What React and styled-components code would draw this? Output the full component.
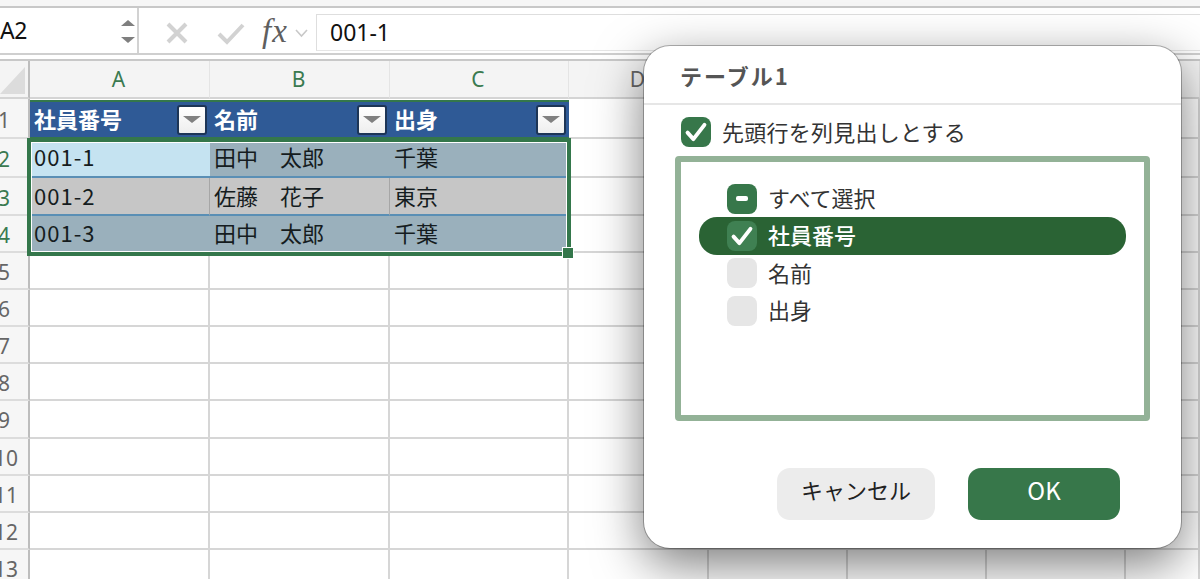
import styled, { createGlobalStyle } from "styled-components";

const GlobalStyle = createGlobalStyle`
  html, body {
    margin: 0;
    padding: 0;
    background: #fff;
    font-family: "Noto Sans", "Noto Sans CJK JP", sans-serif;
  }
`;

const JP = `"Noto Sans CJK JP", "Noto Sans", sans-serif`;

const Page = styled.div`
  position: relative;
  width: 1200px;
  height: 579px;
  overflow: hidden;
  background: #fff;
`;

const TopStrip = styled.div`
  height: 6px;
  background: #f6f6f6;
  border-bottom: 2px solid #c8c8c8;
`;

const FormulaBar = styled.div`
  display: flex;
  height: 47px;
  box-sizing: border-box;
  border-bottom: 2px solid #cfcfcf;
  background: #fff;
`;

const NameBox = styled.div`
  width: 139px;
  box-sizing: border-box;
  display: flex;
  align-items: center;
  justify-content: space-between;
  padding: 0 2px 2px 0;
  border-right: 2px solid #d2d2d2;
  font-size: 23px;
  letter-spacing: -0.5px;
  color: #111;
`;

const Spinner = styled.div`
  display: flex;
  flex-direction: column;
  gap: 11px;
  margin-top: 3px;
`;

const Tools = styled.div`
  width: 177px;
  box-sizing: border-box;
  display: flex;
  align-items: center;
  padding: 5px 0 0 26px;
`;

const FxLabel = styled.span`
  font-family: "Liberation Serif", serif;
  font-style: italic;
  font-size: 33px;
  line-height: 1;
  letter-spacing: 1px;
  color: #5f5f5f;
  margin: -4px 6px 0 16px;
`;

const FormulaInput = styled.div`
  flex: 1;
  margin-top: 6px;
  height: 37px;
  box-sizing: border-box;
  padding: 0 13px 2px;
  display: flex;
  align-items: center;
  border-top: 1px solid #dedede;
  border-left: 1px solid #dedede;
  border-bottom: 1px solid #e6e6e6;
  font-size: 23px;
  color: #111;
`;

const BarGap = styled.div`
  height: 4px;
  background: #fff;
  border-bottom: 2px solid #c8c8c8;
`;

const Sheet = styled.div`
  position: relative;
`;

const Row = styled.div`
  display: grid;
  grid-template-columns: 30px 180px 180px 179px 140px 139px 139px 139px 74px;
  height: ${(p) => p.$h}px;
`;

const Corner = styled.div`
  box-sizing: border-box;
  background: #f4f4f4;
  border-right: 2px solid #bdbdbd;
  border-bottom: 2px solid #d4d4d4;
  display: flex;
  align-items: flex-end;
  justify-content: flex-end;
  padding: 0 3px 3px 0;
`;

const ColHead = styled.div`
  box-sizing: border-box;
  background: #f4f4f4;
  border-right: 1px solid #e4e4e4;
  border-bottom: 2px solid #d4d4d4;
  padding-right: 2px;
  display: flex;
  align-items: center;
  justify-content: center;
  font-size: 21px;
  color: ${(p) => (p.$active ? "#3a7a50" : "#666")};
`;

const RowHead = styled.div`
  box-sizing: border-box;
  background: #f6f6f6;
  border-right: 2px solid #bdbdbd;
  border-bottom: 2px solid #dcdcdc;
  padding-top: 3px;
  display: flex;
  align-items: center;
  font-size: 21px;
  color: ${(p) => (p.$active ? "#3a7a50" : "#666")};
`;

const RowNum = styled.span`
  width: ${(p) => (p.$wide ? 12 : 8)}px;
  display: flex;
  justify-content: center;
  white-space: nowrap;
`;

const Cell = styled.div`
  box-sizing: border-box;
  border-right: 2px solid #d6d6d6;
  border-bottom: 2px solid #d6d6d6;
`;

const HeadCell = styled.div`
  box-sizing: border-box;
  margin-top: 1px;
  background: #2f5a96;
  border-top: 2px solid #34774b;
  border-bottom: 2px solid #34774b;
  display: flex;
  align-items: center;
  justify-content: space-between;
  padding: 0 3px 0 4px;
  font-family: ${JP};
  font-size: 22px;
  font-weight: 700;
  color: #fff;
`;

const HeadLabel = styled.span`
  margin-top: -4px;
`;

const FilterButton = styled.div`
  width: 30px;
  height: 30px;
  box-sizing: border-box;
  border: 2px solid #1d3556;
  border-radius: 3px;
  background: linear-gradient(#fff, #eee);
  display: flex;
  align-items: center;
  justify-content: center;
`;

const Arrow = styled.div`
  width: 0;
  height: 0;
  border-left: ${(p) => p.$size}px solid transparent;
  border-right: ${(p) => p.$size}px solid transparent;
  ${(p) => (p.$up ? "border-bottom" : "border-top")}: ${(p) =>
    Math.round(p.$size * 0.8)}px solid ${(p) => p.$color};
`;

const DataCell = styled.div`
  box-sizing: border-box;
  background: ${(p) => p.$bg};
  border-bottom: 2px solid #5a8fb5;
  border-right: ${(p) => (p.$divider ? "1px solid #a6a6a6" : "none")};
  display: flex;
  align-items: center;
  padding: 0 0 3px 4px;
  font-family: ${JP};
  font-size: 22px;
  color: #151c20;
  white-space: pre;
  letter-spacing: ${(p) => (p.$code ? "1px" : "0")};
`;

const Selection = styled.div`
  position: absolute;
  left: 27px;
  top: 77px;
  width: 544px;
  height: 118px;
  box-sizing: border-box;
  border: 4px solid #34774b;
  box-shadow: inset 0 0 0 1px #fff;
  pointer-events: none;
`;

const Handle = styled.div`
  position: absolute;
  right: -6px;
  bottom: -6px;
  width: 10px;
  height: 10px;
  background: #34774b;
  outline: 1px solid #fff;
`;

const Dialog = styled.div`
  position: absolute;
  left: 644px;
  top: 46px;
  width: 537px;
  height: 502px;
  box-sizing: border-box;
  display: flex;
  flex-direction: column;
  background: #fff;
  border-radius: 26px;
  box-shadow: 0 0 0 1px rgba(0, 0, 0, 0.28), 0 16px 50px rgba(0, 0, 0, 0.52);
  font-family: ${JP};
`;

const DialogTitle = styled.div`
  height: 59px;
  flex: none;
  box-sizing: border-box;
  border-bottom: 2px solid #e6e6e6;
  padding-left: 36px;
  display: flex;
  align-items: center;
  font-size: 22px;
  font-weight: 700;
  letter-spacing: 2px;
  color: #555;
`;

const DialogBody = styled.div`
  flex: 1;
  display: flex;
  flex-direction: column;
  padding: 12px 31px 28px;
`;

const HeaderOption = styled.div`
  display: flex;
  align-items: center;
  gap: 11px;
  padding-left: 6px;
  height: 30px;
  font-size: 22px;
  letter-spacing: 0.25px;
  color: #333;
`;

const OptionLabel = styled.span`
  margin-top: -3px;
`;

const Box = styled.div`
  width: 30px;
  height: 30px;
  flex: none;
  border-radius: 8px;
  display: flex;
  align-items: center;
  justify-content: center;
  background: ${(p) =>
    p.$state === "off" ? "#e6e6e6" : p.$hot ? "#3f8052" : "#37774a"};
`;

const Dash = styled.div`
  width: 12px;
  height: 5px;
  border-radius: 2px;
  background: #fff;
`;

const ListBox = styled.div`
  margin-top: 9px;
  height: 265px;
  box-sizing: border-box;
  border: 6px solid #93b297;
  border-radius: 4px;
  padding: 18px 18px 0;
`;

const ListRow = styled.div`
  display: flex;
  align-items: center;
  gap: 11px;
  height: 37.3px;
  padding-left: 28px;
  border-radius: 18px;
  font-size: 22px;
  color: ${(p) => (p.$selected ? "#fff" : "#333")};
  font-weight: ${(p) => (p.$selected ? 500 : 400)};
  background: ${(p) => (p.$selected ? "#2a6334" : "transparent")};
`;

const Footer = styled.div`
  margin-top: auto;
  display: flex;
  justify-content: flex-end;
  gap: 33px;
  padding-right: 30px;
`;

const Button = styled.button`
  width: ${(p) => (p.$primary ? 152 : 158)}px;
  height: 52px;
  padding: 0 0 10px;
  border: none;
  border-radius: 13px;
  font-family: inherit;
  font-size: ${(p) => (p.$primary ? 24 : 22)}px;
  font-weight: 400;
  color: ${(p) => (p.$primary ? "#fff" : "#222")};
  background: ${(p) => (p.$primary ? "#37774a" : "#ececec")};
`;

const tableRows = [
  { num: 2, cells: ["001-1", "田中　太郎", "千葉"], bg: "#9ab0bc", h: 39 },
  { num: 3, cells: ["001-2", "佐藤　花子", "東京"], bg: "#c6c6c6", h: 38 },
  { num: 4, cells: ["001-3", "田中　太郎", "千葉"], bg: "#9ab0bc", h: 37 },
];

const emptyRows = [
  { num: 5, h: 37 },
  { num: 6, h: 37 },
  { num: 7, h: 37 },
  { num: 8, h: 37 },
  { num: 9, h: 37.5 },
  { num: 10, h: 37.5 },
  { num: 11, h: 37 },
  { num: 12, h: 37 },
  { num: 13, h: 37 },
];

const columns = ["A", "B", "C", "D", "E", "F", "G", "H"];

function CheckMark({ size = 26 }) {
  return (
    <svg width={size} height={size} viewBox="0 0 20 20" fill="none">
      <path
        d="M3.5 10.5 L8 15.5 L16.5 4.5"
        stroke="#fff"
        strokeWidth="3"
        strokeLinecap="round"
        strokeLinejoin="round"
      />
    </svg>
  );
}

function RowLabel({ num, active }) {
  return (
    <RowHead $active={active}>
      <RowNum $wide={num > 9}>{num}</RowNum>
    </RowHead>
  );
}

function TrailingCells({ from }) {
  return Array.from({ length: 8 - from }, (_, i) => <Cell key={i} />);
}

function App() {
  return (
    <Page>
      <GlobalStyle />
      <TopStrip />
      <FormulaBar>
        <NameBox>
          A2
          <Spinner>
            <Arrow $up $size={7} $color="#7f7f7f" />
            <Arrow $size={7} $color="#7f7f7f" />
          </Spinner>
        </NameBox>
        <Tools>
          <svg width="24" height="24" viewBox="0 0 24 24" fill="none">
            <path
              d="M3 3 L21 21 M21 3 L3 21"
              stroke="#d2d2d2"
              strokeWidth="4"
            />
          </svg>
          <svg
            width="30"
            height="24"
            viewBox="0 0 30 24"
            fill="none"
            style={{ marginLeft: 27 }}
          >
            <path d="M3 13 L11 21 L27 4" stroke="#d2d2d2" strokeWidth="4" />
          </svg>
          <FxLabel>fx</FxLabel>
          <svg width="15" height="10" viewBox="0 0 15 10" fill="none">
            <path d="M2 2 L7.5 8 L13 2" stroke="#c8c8c8" strokeWidth="1.6" />
          </svg>
        </Tools>
        <FormulaInput>001-1</FormulaInput>
      </FormulaBar>
      <BarGap />
      <Sheet>
        <Row $h={38}>
          <Corner>
            <svg width="25" height="27" viewBox="0 0 25 27">
              <path d="M25 0 V27 H0 Z" fill="#dcdcdc" />
            </svg>
          </Corner>
          {columns.map((c, i) => (
            <ColHead key={c} $active={i < 3}>
              {c}
            </ColHead>
          ))}
        </Row>
        <Row $h={40}>
          <RowLabel num={1} />
          {["社員番号", "名前", "出身"].map((label) => (
            <HeadCell key={label}>
              <HeadLabel>{label}</HeadLabel>
              <FilterButton>
                <Arrow $size={9} $color="#808080" />
              </FilterButton>
            </HeadCell>
          ))}
          <TrailingCells from={3} />
        </Row>
        {tableRows.map((row, r) => (
          <Row key={row.num} $h={row.h}>
            <RowLabel num={row.num} active />
            {row.cells.map((text, c) => (
              <DataCell
                key={c}
                $code={c === 0}
                $bg={r === 0 && c === 0 ? "#c5e3f1" : row.bg}
                $divider={row.num === 3 && c < 2}
              >
                {text}
              </DataCell>
            ))}
            <TrailingCells from={3} />
          </Row>
        ))}
        {emptyRows.map((row) => (
          <Row key={row.num} $h={row.h}>
            <RowLabel num={row.num} />
            <TrailingCells from={0} />
          </Row>
        ))}
        <Selection>
          <Handle />
        </Selection>
      </Sheet>

      <Dialog>
        <DialogTitle>テーブル1</DialogTitle>
        <DialogBody>
          <HeaderOption>
            <Box>
              <CheckMark />
            </Box>
            <OptionLabel>先頭行を列見出しとする</OptionLabel>
          </HeaderOption>
          <ListBox>
            <ListRow>
              <Box>
                <Dash />
              </Box>
              <OptionLabel>すべて選択</OptionLabel>
            </ListRow>
            <ListRow $selected>
              <Box $hot>
                <CheckMark />
              </Box>
              <OptionLabel>社員番号</OptionLabel>
            </ListRow>
            <ListRow>
              <Box $state="off" />
              <OptionLabel>名前</OptionLabel>
            </ListRow>
            <ListRow>
              <Box $state="off" />
              <OptionLabel>出身</OptionLabel>
            </ListRow>
          </ListBox>
          <Footer>
            <Button>キャンセル</Button>
            <Button $primary>OK</Button>
          </Footer>
        </DialogBody>
      </Dialog>
    </Page>
  );
}

export default App;
